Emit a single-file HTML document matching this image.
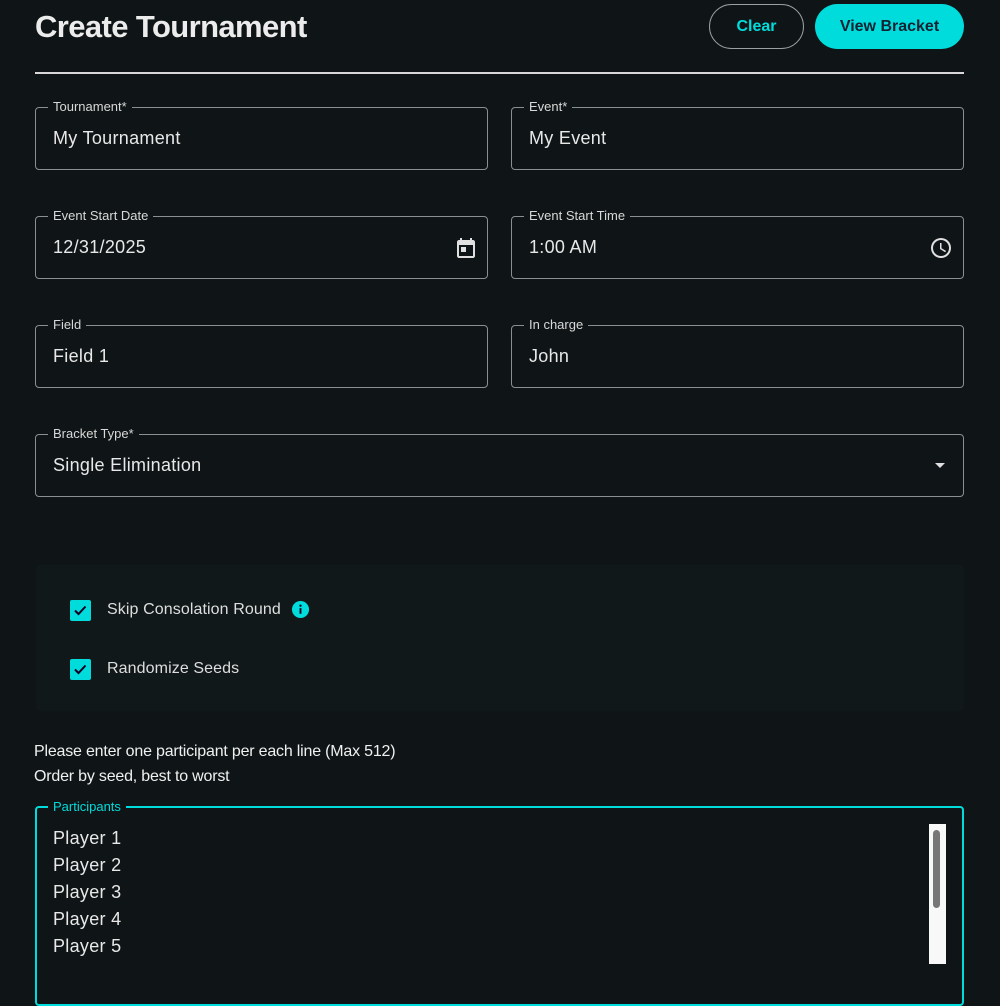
<!DOCTYPE html>
<html><head><style>
*{box-sizing:border-box;margin:0;padding:0}
body{width:1000px;height:954px;overflow:hidden;background:#0f1516;font-family:"Liberation Sans",sans-serif;color:#e6e6e6;position:relative}
.a{position:absolute}
h1{position:absolute;left:35px;top:9px;font-size:31px;font-weight:bold;color:#ececec;letter-spacing:-0.6px}
.btn{position:absolute;top:4px;height:45px;border-radius:23px;font-size:16px;font-weight:bold;display:flex;align-items:center;justify-content:center}
.f{position:absolute;height:63px;border:1px solid #8a8f90;border-radius:4px}
.f .l{position:absolute;top:-9px;left:12px;padding:0 5px;background:#0f1516;font-size:13px;color:#d8d8d8;line-height:16px}
.f .v{position:absolute;left:17px;top:20px;font-size:18px;color:#e8e8e8;letter-spacing:0.3px}
.cb{position:absolute;left:70px;width:21px;height:21px;background:#00dcdc;border-radius:2px}
.ct{position:absolute;left:107px;font-size:16px;color:#dedede;letter-spacing:0.1px}
.p{font-size:18px;color:#e8e8e8;line-height:27px;letter-spacing:0.3px}
</style></head><body>
<h1>Create Tournament</h1>
<div class="btn" style="left:709px;width:95px;border:1px solid #9a9fa0;color:#00dcdc">Clear</div>
<div class="btn" style="left:815px;width:149px;background:#00dcdc;color:#123;">View Bracket</div>
<div class="a" style="left:35px;top:72px;width:929px;height:2px;background:#d8d8d8"></div>

<div class="f" style="left:35px;top:107px;width:453px"><span class="l">Tournament*</span><span class="v">My Tournament</span></div>
<div class="f" style="left:511px;top:107px;width:453px"><span class="l">Event*</span><span class="v">My Event</span></div>
<div class="f" style="left:35px;top:216px;width:453px"><span class="l">Event Start Date</span><span class="v">12/31/2025</span>
<svg class="a" style="left:418px;top:19px" width="24" height="24" viewBox="0 0 24 24"><path fill="#e0e0e0" d="M19 4h-1V2h-2v2H8V2H6v2H5c-1.1 0-2 .9-2 2v14c0 1.1.9 2 2 2h14c1.1 0 2-.9 2-2V6c0-1.1-.9-2-2-2zm0 16H5V9h14v11zM7 11h5v5H7z"/></svg></div>
<div class="f" style="left:511px;top:216px;width:453px"><span class="l">Event Start Time</span><span class="v">1:00 AM</span>
<svg class="a" style="left:417px;top:19px" width="24" height="24" viewBox="0 0 24 24"><path fill="#e0e0e0" d="M12 2a10 10 0 100 20 10 10 0 000-20zm0 18a8 8 0 110-16 8 8 0 010 16zm.5-13H11v6l5.2 3.2.8-1.3-4.5-2.7z"/></svg></div>
<div class="f" style="left:35px;top:325px;width:453px"><span class="l">Field</span><span class="v">Field 1</span></div>
<div class="f" style="left:511px;top:325px;width:453px"><span class="l">In charge</span><span class="v">John</span></div>
<div class="f" style="left:35px;top:434px;width:929px"><span class="l">Bracket Type*</span><span class="v">Single Elimination</span>
<svg class="a" style="left:896px;top:22px" width="16" height="16" viewBox="0 0 16 16"><path fill="#e0e0e0" d="M3 6h10l-5 5z"/></svg></div>

<div class="a" style="left:36px;top:565px;width:928px;height:146px;background:#111819;border-radius:4px"></div>
<div class="cb" style="top:600px"><svg width="21" height="21" viewBox="0 0 21 21"><path d="M5 10.5l3.5 3.5 7-7.5" stroke="#102" stroke-width="2" fill="none"/></svg></div>
<div class="ct" style="top:601px">Skip Consolation Round</div>
<svg class="a" style="left:291px;top:600px" width="19" height="19" viewBox="0 0 20 20"><circle cx="10" cy="10" r="9" fill="#00dcdc"/><rect x="9" y="8.5" width="2" height="6" fill="#102"/><circle cx="10" cy="6" r="1.2" fill="#102"/></svg>
<div class="cb" style="top:659px"><svg width="21" height="21" viewBox="0 0 21 21"><path d="M5 10.5l3.5 3.5 7-7.5" stroke="#102" stroke-width="2" fill="none"/></svg></div>
<div class="ct" style="top:660px">Randomize Seeds</div>

<div class="a" style="left:34px;top:739px;font-size:16px;line-height:25px;color:#f0f0f0;letter-spacing:-0.2px">Please enter one participant per each line (Max 512)<br>Order by seed, best to worst</div>

<div class="a" style="left:35px;top:806px;width:929px;height:200px;border:2px solid #00dcdc;border-radius:4px">
<span class="a" style="top:-9px;left:11px;padding:0 5px;background:#0f1516;font-size:13px;color:#00dcdc;line-height:16px">Participants</span>
<div class="a p" style="left:16px;top:17px">Player 1<br>Player 2<br>Player 3<br>Player 4<br>Player 5</div>
<div class="a" style="left:892px;top:16px;width:17px;height:140px;background:#f8f8f8"><div style="margin:6px 0 0 4px;width:7px;height:78px;background:#777;border-radius:4px"></div></div>
</div>
</body></html>
